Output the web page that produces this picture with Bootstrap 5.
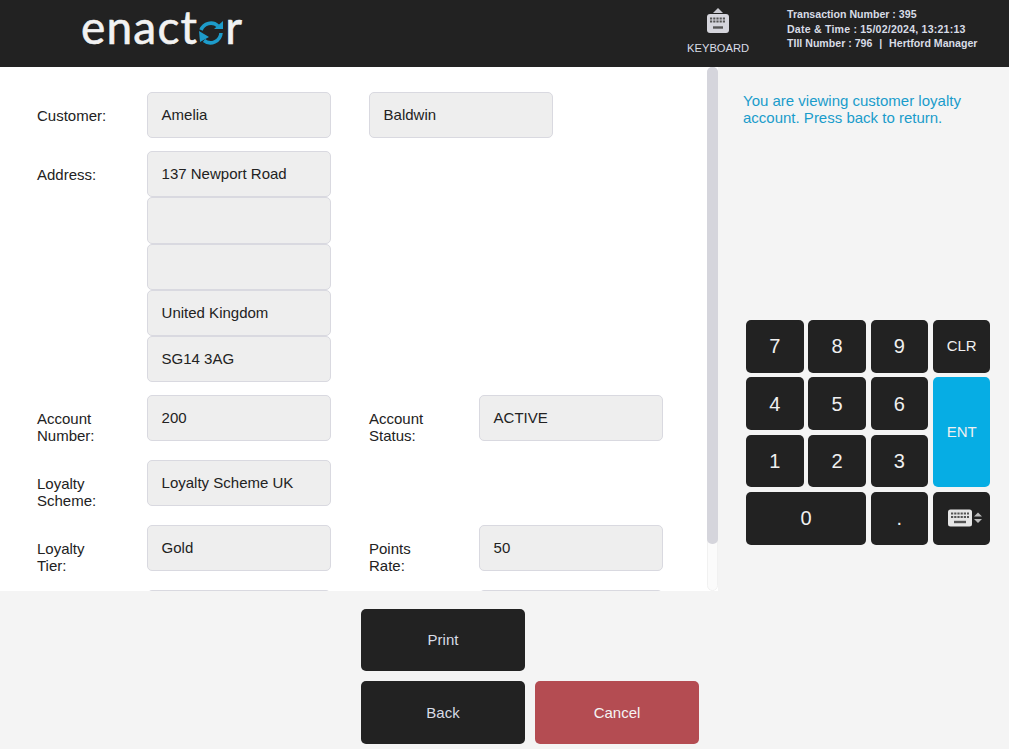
<!DOCTYPE html>
<html lang="en">
<head>
  <meta charset="UTF-8" />
  <meta name="viewport" content="width=device-width, initial-scale=1.0"/>
  <title>Enactor POS - Customer Loyalty</title>
  <link href="https://cdn.jsdelivr.net/npm/bootstrap@5.3.3/dist/css/bootstrap.min.css" rel="stylesheet"/>
  <style>
    html, body {
      height: 749px;
      overflow: hidden;
    }

    body {
      font-family: "Liberation Sans", Arial, sans-serif;
      font-size: 15px;
      background: #f4f4f4;
      color: #222;
    }

    .pos-header {
      height: 67px;
      background: #222;
      color: #d8dce6;
    }

    .brand {
      width: 687px;
      padding-left: 81px;
      padding-top: 2px;
      font-family: Lato, sans-serif;
      font-size: 46px;
      line-height: 50px;
      color: #f2f2f2;
      letter-spacing: 1.2px;
      -webkit-text-stroke: 0.6px #f2f2f2;
    }

    .brand svg {
      width: 28px;
      height: 28px;
      margin: 0 0 -2px -1px;
    }

    .kbd-btn {
      width: 62px;
      font-size: 11.2px;
      line-height: 13px;
      padding-top: 8px;
    }

    .kbd-btn svg {
      width: 24px;
      height: 25px;
      display: block;
      margin: 0 auto 9px;
    }

    .till-info {
      margin-left: 38px;
      padding-top: 7px;
      font-size: 10.6px;
      line-height: 14.5px;
      font-weight: 700;
      white-space: nowrap;
    }

    .till-date {
      letter-spacing: 0.2px;
    }

    .till-sep {
      margin: 0 1px;
    }

    .content-area {
      height: 524px;
    }

    .form-pane {
      width: 718px;
      background: #fff;
      position: relative;
      overflow: hidden;
      padding: 25px 0 0 37px;
    }

    .scroll-track {
      position: absolute;
      top: 0;
      right: 0;
      bottom: 0;
      width: 11px;
      background: #fbfbfb;
      border: 1px solid #f1f1f1;
      border-radius: 6px;
    }

    .scroll-thumb {
      position: absolute;
      top: -1px;
      left: -1px;
      right: -1px;
      height: 477px;
      background: #d5d5dc;
      border-radius: 5px;
    }

    .form-line {
      display: flex;
      margin-bottom: 13px;
      line-height: 17px;
    }

    .form-line.stacked {
      margin: 16px 0 0;
    }

    .form-line.first-stacked {
      margin-top: 13px;
    }

    .field-label {
      width: 110px;
      flex: none;
      padding-top: 15px;
    }

    .field-group {
      width: 184px;
      flex: none;
    }

    .field-box {
      height: 46.2px;
      display: flex;
      align-items: center;
      padding: 0 13.6px 1px;
      background: #eee;
      border: 1px solid #d9d9e0;
      border-radius: 5px;
    }

    .gap-col {
      width: 38px;
      flex: none;
    }

    .info-pane {
      width: 291px;
      padding: 25px 0 0 25px;
    }

    .info-msg {
      color: #1a9ccb;
      line-height: 17px;
      height: 228px;
      width: 240px;
    }

    .keypad {
      display: grid;
      width: 245px;
      margin-left: 3px;
      grid-template-columns: repeat(4, 57.6px);
      grid-auto-rows: 52.5px;
      column-gap: 4.7px;
      row-gap: 4.85px;
    }

    .pad-key {
      background: #222;
      color: #f0f0f0;
      border: 0;
      border-radius: 5px;
      font-size: 20px;
      padding: 0;
      display: flex;
      align-items: center;
      justify-content: center;
    }

    .pad-key.txt {
      font-size: 15px;
    }

    .pad-key.ent {
      grid-row: span 2;
      background: #06ade4;
    }

    .pad-key.wide {
      grid-column: span 2;
    }

    .pad-key svg {
      width: 40px;
      height: 18px;
    }

    .action-bar {
      width: 718px;
      padding: 18px 0 0 361px;
      display: grid;
      grid-template-columns: 164px 164px;
      grid-template-rows: 62px 63px;
      gap: 10px;
    }

    .act-btn {
      border: 0;
      border-radius: 5px;
      background: #222;
      color: #d8dce6;
      font-size: 15px;
      padding: 1px 0 0;
    }

    .act-btn.danger {
      background: #b44c52;
      color: #f4f4f4;
    }
  </style>
</head>
<body>

  <header class="pos-header d-flex">
    <div class="brand">enact<svg viewBox="0 0 28 28"><path d="M4 11a10.500 10.500 0 0 1 17-4" fill="none" stroke="#1d9bca" stroke-width="3.600"/><path d="M24 14a10.500 10.500 0 0 1-17 7.500" fill="none" stroke="#1d9bca" stroke-width="3.600"/><path d="M17 10h9V2zM2 12l10 6-9 5z" fill="#1d9bca"/></svg>r</div>
    <div class="kbd-btn text-center">
      <svg viewBox="0 0 24 25">
        <path d="M12 0l5 5H7z" fill="#c9c9d0"/>
        <rect x="1" y="6" width="22" height="19" rx="3" fill="#d5d5dc"/>
        <path d="M4 10.500H20M4 13.500H20" stroke="#555" stroke-width="2" stroke-dasharray="2.200 1"/>
        <path d="M7 19.500H17" stroke="#555" stroke-width="2.400"/>
      </svg>
      KEYBOARD
    </div>
    <div class="till-info">
      <div>Transaction Number : 395</div>
      <div class="till-date">Date &amp; Time : 15/02/2024, 13:21:13</div>
      <div>TIll Number : 796 &nbsp;<span class="till-sep">|</span>&nbsp; Hertford Manager</div>
    </div>
  </header>

  <div class="content-area d-flex">
    <div class="form-pane">
      <div class="form-line">
        <div class="field-label">Customer:</div>
        <div class="field-group"><div class="field-box">Amelia</div></div>
        <div class="gap-col"></div>
        <div class="field-group"><div class="field-box">Baldwin</div></div>
      </div>
      <div class="form-line mb-0">
        <div class="field-label">Address:</div>
        <div class="field-group">
          <div class="field-box">137 Newport Road</div>
          <div class="field-box"></div>
          <div class="field-box"></div>
          <div class="field-box">United Kingdom</div>
          <div class="field-box">SG14 3AG</div>
        </div>
      </div>
      <div class="form-line first-stacked">
        <div class="field-label">Account<br>Number:</div>
        <div class="field-group"><div class="field-box">200</div></div>
        <div class="gap-col"></div>
        <div class="field-label">Account<br>Status:</div>
        <div class="field-group"><div class="field-box">ACTIVE</div></div>
      </div>
      <div class="form-line stacked">
        <div class="field-label">Loyalty<br>Scheme:</div>
        <div class="field-group"><div class="field-box">Loyalty Scheme UK</div></div>
      </div>
      <div class="form-line stacked">
        <div class="field-label">Loyalty<br>Tier:</div>
        <div class="field-group"><div class="field-box">Gold</div></div>
        <div class="gap-col"></div>
        <div class="field-label">Points<br>Rate:</div>
        <div class="field-group"><div class="field-box">50</div></div>
      </div>
      <div class="form-line stacked">
        <div class="field-label"></div>
        <div class="field-group"><div class="field-box"></div></div>
        <div class="gap-col"></div>
        <div class="field-label"></div>
        <div class="field-group"><div class="field-box"></div></div>
      </div>
      <div class="scroll-track"><div class="scroll-thumb"></div></div>
    </div>

    <aside class="info-pane">
      <div class="info-msg">You are viewing customer loyalty account. Press back to return.</div>
      <div class="keypad">
        <button class="pad-key">7</button>
        <button class="pad-key">8</button>
        <button class="pad-key">9</button>
        <button class="pad-key txt">CLR</button>
        <button class="pad-key">4</button>
        <button class="pad-key">5</button>
        <button class="pad-key">6</button>
        <button class="pad-key txt ent">ENT</button>
        <button class="pad-key">1</button>
        <button class="pad-key">2</button>
        <button class="pad-key">3</button>
        <button class="pad-key wide">0</button>
        <button class="pad-key">.</button>
        <button class="pad-key">
          <svg viewBox="0 0 40 18">
            <rect x="6" y="0.500" width="24" height="17" rx="2.500" fill="#e6e6e6"/>
            <path d="M9 4.500H27M9 8H27" stroke="#555" stroke-width="2.200" stroke-dasharray="2.200 1"/>
            <path d="M12 13H24" stroke="#555" stroke-width="2.400"/>
            <path d="M36 3.500l4 4h-8zM36 14l4-4h-8z" fill="#bbb"/>
          </svg>
        </button>
      </div>
    </aside>
  </div>

  <div class="action-bar">
    <button class="act-btn">Print</button>
    <div></div>
    <button class="act-btn">Back</button>
    <button class="act-btn danger">Cancel</button>
  </div>

  <script src="https://cdn.jsdelivr.net/npm/bootstrap@5.3.3/dist/js/bootstrap.bundle.min.js"></script>
</body>
</html>
